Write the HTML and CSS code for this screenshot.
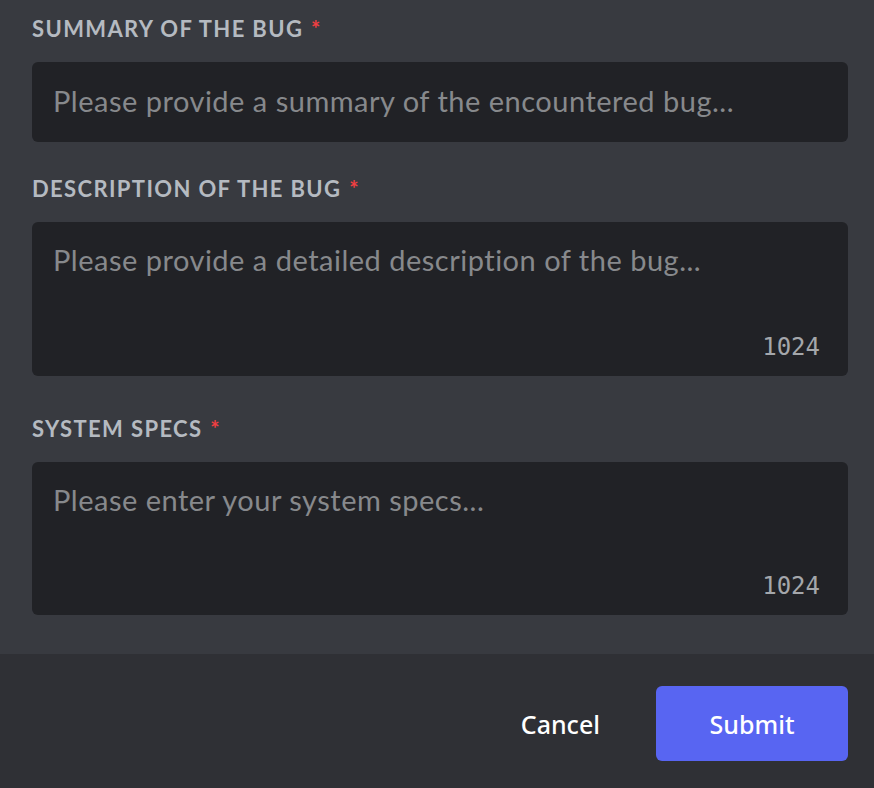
FILE: index.html
```html
<!DOCTYPE html>
<html lang="en">
<head>
<meta charset="utf-8">
<title>Bug report</title>
<link rel="stylesheet" href="styles.css">
</head>
<body>
<div class="modal">
  <div class="form">
    <div class="field field-first">
      <label class="label">Summary of the bug <span class="req">*</span></label>
      <div class="input"><span class="placeholder">Please provide a summary of the encountered bug...</span></div>
    </div>
    <div class="field field-area">
      <label class="label">Description of the bug <span class="req">*</span></label>
      <div class="input textarea">
        <span class="placeholder">Please provide a detailed description of the bug...</span>
        <span class="counter">1024</span>
      </div>
    </div>
    <div class="field field-last">
      <label class="label">System specs <span class="req">*</span></label>
      <div class="input textarea textarea-last">
        <span class="placeholder">Please enter your system specs...</span>
        <span class="counter">1024</span>
      </div>
    </div>
  </div>
  <div class="footer">
    <button class="btn btn-link">Cancel</button>
    <button class="btn btn-primary">Submit</button>
  </div>
</div>
</body>
</html>
```
FILE: styles.css
```css
html, body {
  margin: 0;
  padding: 0;
  background: #383a40;
}
.modal {
  display: flex;
  flex-direction: column;
  min-height: 788px;
}
.form {
  display: flex;
  flex-direction: column;
  padding: 15px 26px 39px 32px;
  background: #383a40;
}
.field {
  display: flex;
  flex-direction: column;
}
.field-first { margin-bottom: 33px; }
.field-area { margin-bottom: 39px; }
.label {
  font-family: Lato, "Open Sans", sans-serif;
  font-weight: 700;
  font-size: 22px;
  line-height: 28px;
  text-transform: uppercase;
  color: #b5bac1;
  margin-bottom: 19px;
  letter-spacing: 0.062em;
}
.req {
  color: #f23f42;
  margin-left: 1px;
}
.input {
  background: #212226;
  border-radius: 6px;
  padding: 21px 20px 23px 21px;
  font-family: Lato, "Open Sans", sans-serif;
  font-size: 29px;
  line-height: 36px;
  letter-spacing: 0.5px;
}
.placeholder {
  color: #87898c;
}
.textarea {
  display: flex;
  flex-direction: column;
  justify-content: space-between;
  height: 154px;
  box-sizing: border-box;
  padding: 20px 28px 15px 21px;
}
.textarea-last {
  height: 153px;
}
.counter {
  align-self: flex-end;
  font-family: "DejaVu Sans Mono", monospace;
  font-size: 24px;
  line-height: 28px;
  letter-spacing: 0;
  color: #a4a7ab;
}
.footer {
  flex: 1;
  display: flex;
  justify-content: flex-end;
  align-items: flex-start;
  gap: 28px;
  padding: 32px 26px 0 32px;
  background: #2f3035;
}
.btn {
  font-family: "Noto Sans", sans-serif;
  font-weight: 500;
  font-size: 25px;
  height: 75px;
  border: none;
  border-radius: 6px;
  color: #ffffff;
  cursor: pointer;
}
.btn-link {
  background: transparent;
  padding: 0 28px;
}
.btn-primary {
  background: #5865f2;
  width: 192px;
}
```
